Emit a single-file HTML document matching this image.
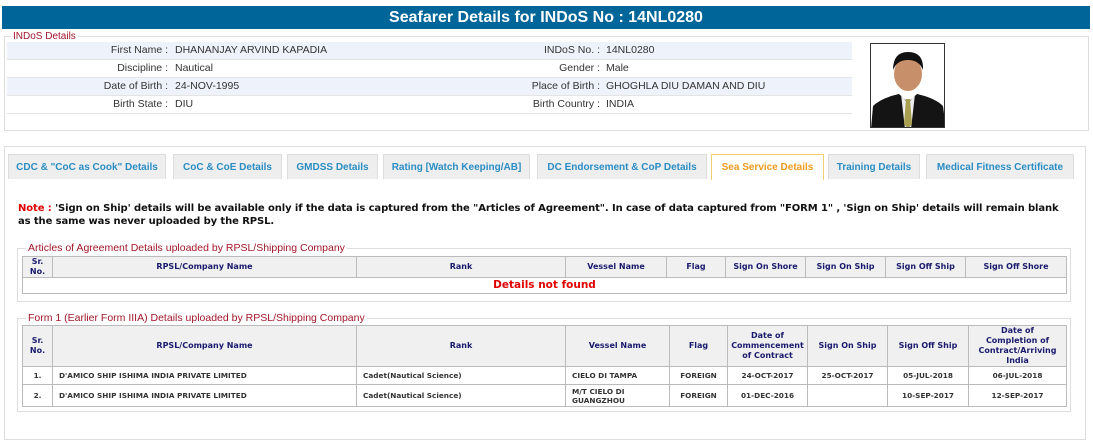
<!DOCTYPE html>
<html><head><meta charset="utf-8"><style>
*{box-sizing:border-box}
body{margin:0;width:1093px;height:447px;background:#fff;font-family:"Liberation Sans",Arial,sans-serif;position:relative;overflow:hidden}
.abs{position:absolute}
.hdr{left:2px;top:6px;width:1088px;height:23px;background:#006699;color:#fff;font-weight:bold;font-size:16px;text-align:center;line-height:23px}
fieldset{position:absolute;margin:0;padding:0;border:1px solid #ddd}
legend{font-size:10.5px;color:#a3162a;padding:0 2px;margin-left:6px}
.row{position:absolute;left:7px;width:845px;height:18px;font-size:10.5px;color:#333;line-height:17px;border-bottom:1px solid #e4e4e4}
.row.b{background:#eef3fb}
.row span{position:absolute}
.l1{right:684px}.v1{left:168px}.l2{right:252px}.v2{left:599px}
.tab{position:absolute;top:154px;height:25px;background:#eee;border:1px solid #ddd;border-bottom:none;color:#2a8dc4;font-size:10px;font-weight:bold;text-align:center;line-height:25px;white-space:nowrap}
.tab.act{background:#fff;border-color:#f0d070;color:#f09a1e;height:26px}
.note{left:18px;top:202px;width:1048px;font-family:"DejaVu Sans",Verdana,sans-serif;font-size:10px;letter-spacing:-0.1px;font-weight:bold;line-height:13px;color:#111}
table{position:absolute;border-collapse:collapse;font-family:"DejaVu Sans",Verdana,sans-serif;table-layout:fixed}
th{background:#f0f0f0;color:#1a1a6e;font-size:8px;font-weight:bold;border:1px solid #bbb;padding:0;text-align:center;line-height:10px}
td{font-size:7.3px;color:#333;font-weight:bold;border:1px solid #bbb;padding:0 6px;line-height:9px}
.c{text-align:center}
</style></head><body>
<div class="abs hdr">Seafarer Details for INDoS No : 14NL0280</div>
<fieldset style="left:4px;top:31px;width:1085px;height:100px"><legend style="font-size:10px">INDoS Details</legend></fieldset>
<div class="row b" style="top:42px"><span class="l1">First Name :</span><span class="v1">DHANANJAY ARVIND KAPADIA</span><span class="l2">INDoS No. :</span><span class="v2">14NL0280</span></div>
<div class="row" style="top:60px"><span class="l1">Discipline :</span><span class="v1">Nautical</span><span class="l2">Gender :</span><span class="v2">Male</span></div>
<div class="row b" style="top:78px"><span class="l1">Date of Birth :</span><span class="v1">24-NOV-1995</span><span class="l2">Place of Birth :</span><span class="v2">GHOGHLA DIU DAMAN AND DIU</span></div>
<div class="row" style="top:96px"><span class="l1">Birth State :</span><span class="v1">DIU</span><span class="l2">Birth Country :</span><span class="v2">INDIA</span></div>
<div class="abs" style="left:870px;top:43px;width:75px;height:85px;border:1px solid #333;background:#fff;overflow:hidden">
<svg width="75" height="85"><ellipse cx="37" cy="30" rx="14" ry="17" fill="#c8906a"/><path d="M22 26 Q22 8 37 8 Q53 8 52 26 Q48 16 37 16 Q26 16 22 26Z" fill="#111"/><path d="M0 85 L2 62 Q10 54 28 50 L37 58 L46 50 Q64 54 72 62 L75 85Z" fill="#141414"/><path d="M30 50 L37 60 L44 50 L40 85 L34 85Z" fill="#eee"/><path d="M35 55 L39 55 L41 80 L37 85 L33 80Z" fill="#a8a050"/></svg></div>
<div class="abs" style="left:4px;top:146px;width:1082px;height:294px;border:1px solid #ddd"></div>
<div class="tab" style="left:8px;width:158px">CDC &amp; "CoC as Cook" Details</div>
<div class="tab" style="left:173px;width:109px">CoC &amp; CoE Details</div>
<div class="tab" style="left:287px;width:91px">GMDSS Details</div>
<div class="tab" style="left:383px;width:147px">Rating [Watch Keeping/AB]</div>
<div class="tab" style="left:537px;width:170px">DC Endorsement &amp; CoP Details</div>
<div class="tab act" style="left:711px;width:113px">Sea Service Details</div>
<div class="tab" style="left:828px;width:92px">Training Details</div>
<div class="tab" style="left:926px;width:148px">Medical Fitness Certificate</div>
<div class="abs note"><span style="color:#e00000">Note :</span> 'Sign on Ship' details will be available only if the data is captured from the "Articles of Agreement". In case of data captured from "FORM 1" , 'Sign on Ship' details will remain blank<br>as the same was never uploaded by the RPSL.</div>
<fieldset style="left:17px;top:242px;width:1054px;height:60px"><legend style="margin-left:8px">Articles of Agreement Details uploaded by RPSL/Shipping Company</legend></fieldset>
<table style="left:22px;top:256px;width:1044px">
<colgroup><col style="width:30px"><col style="width:304px"><col style="width:209px"><col style="width:101px"><col style="width:59px"><col style="width:80px"><col style="width:80px"><col style="width:80px"><col style="width:101px"></colgroup>
<tr style="height:21px"><th>Sr.<br>No.</th><th>RPSL/Company Name</th><th>Rank</th><th>Vessel Name</th><th>Flag</th><th>Sign On Shore</th><th>Sign On Ship</th><th>Sign Off Ship</th><th>Sign Off Shore</th></tr>
<tr style="height:16px"><td colspan="9" class="c" style="color:#e00000;font-size:10.5px;line-height:13px">Details not found</td></tr>
</table>
<fieldset style="left:17px;top:312px;width:1054px;height:100px"><legend style="margin-left:8px">Form 1 (Earlier Form IIIA) Details uploaded by RPSL/Shipping Company</legend></fieldset>
<table style="left:22px;top:325px;width:1044px">
<colgroup><col style="width:30px"><col style="width:304px"><col style="width:209px"><col style="width:104px"><col style="width:58px"><col style="width:80px"><col style="width:80px"><col style="width:81px"><col style="width:98px"></colgroup>
<tr style="height:41px"><th>Sr.<br>No.</th><th>RPSL/Company Name</th><th>Rank</th><th>Vessel Name</th><th>Flag</th><th>Date of Commencement of Contract</th><th>Sign On Ship</th><th>Sign Off Ship</th><th>Date of<br>Completion of<br>Contract/Arriving<br>India</th></tr>
<tr style="height:18px"><td class="c">1.</td><td>D'AMICO SHIP ISHIMA INDIA PRIVATE LIMITED</td><td>Cadet(Nautical Science)</td><td>CIELO DI TAMPA</td><td class="c">FOREIGN</td><td class="c">24-OCT-2017</td><td class="c">25-OCT-2017</td><td class="c">05-JUL-2018</td><td class="c">06-JUL-2018</td></tr>
<tr style="height:22px"><td class="c">2.</td><td>D'AMICO SHIP ISHIMA INDIA PRIVATE LIMITED</td><td>Cadet(Nautical Science)</td><td>M/T CIELO DI GUANGZHOU</td><td class="c">FOREIGN</td><td class="c">01-DEC-2016</td><td></td><td class="c">10-SEP-2017</td><td class="c">12-SEP-2017</td></tr>
</table>
</body></html>
